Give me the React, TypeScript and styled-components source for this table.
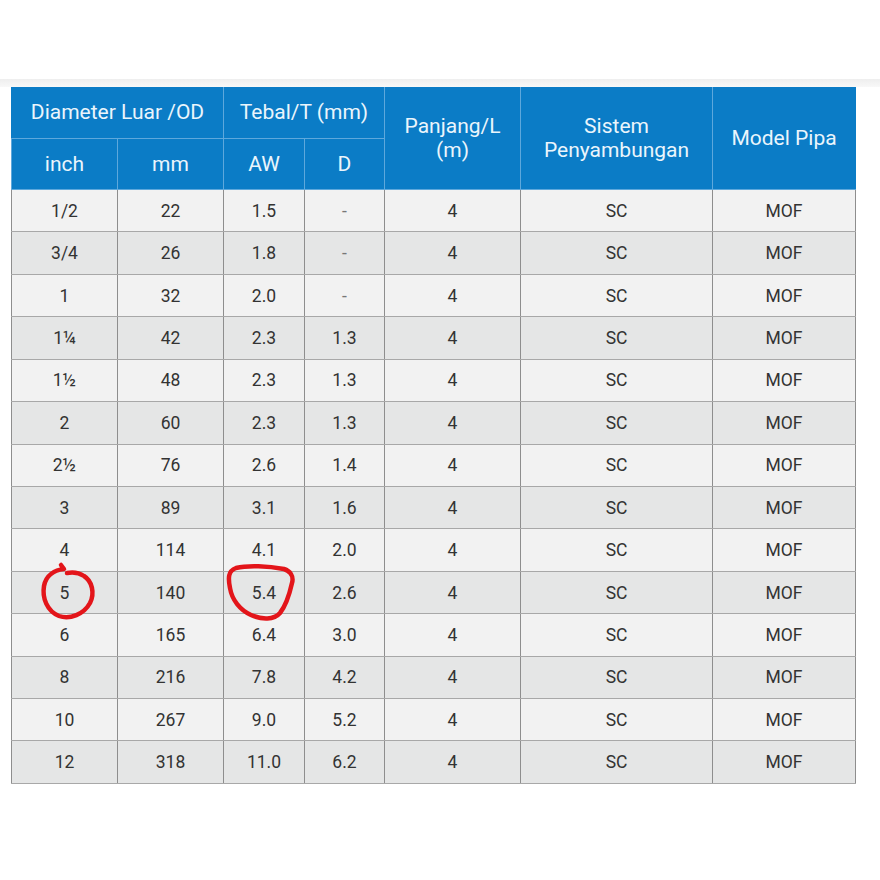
import React from 'react';
import styled, { createGlobalStyle } from 'styled-components';

const GlobalStyle = createGlobalStyle`
  html, body {
    margin: 0;
    padding: 0;
    background: #ffffff;
  }
  body {
    font-family: Roboto, "Liberation Sans", Arial, sans-serif;
  }
`;

const ROWS: Array<Array<string>> = [
  ['1/2', '22', '1.5', '-', '4', 'SC', 'MOF'],
  ['3/4', '26', '1.8', '-', '4', 'SC', 'MOF'],
  ['1', '32', '2.0', '-', '4', 'SC', 'MOF'],
  ['1¼', '42', '2.3', '1.3', '4', 'SC', 'MOF'],
  ['1½', '48', '2.3', '1.3', '4', 'SC', 'MOF'],
  ['2', '60', '2.3', '1.3', '4', 'SC', 'MOF'],
  ['2½', '76', '2.6', '1.4', '4', 'SC', 'MOF'],
  ['3', '89', '3.1', '1.6', '4', 'SC', 'MOF'],
  ['4', '114', '4.1', '2.0', '4', 'SC', 'MOF'],
  ['5', '140', '5.4', '2.6', '4', 'SC', 'MOF'],
  ['6', '165', '6.4', '3.0', '4', 'SC', 'MOF'],
  ['8', '216', '7.8', '4.2', '4', 'SC', 'MOF'],
  ['10', '267', '9.0', '5.2', '4', 'SC', 'MOF'],
  ['12', '318', '11.0', '6.2', '4', 'SC', 'MOF'],
];

const COL_WIDTHS = [106, 106, 81, 80, 136, 192, 143];

const App: React.FC = () => {
  return (
    <Page>
      <GlobalStyle />
      <TopBand />
      <TableWrap>
        <PipeTable>
          <colgroup>
            {COL_WIDTHS.map((w, i) => (
              <col key={i} style={{ width: w }} />
            ))}
          </colgroup>
          <thead>
            <tr>
              <HeadCell colSpan={2}>Diameter Luar /OD</HeadCell>
              <HeadCell colSpan={2}>Tebal/T (mm)</HeadCell>
              <HeadCell rowSpan={2}>
                Panjang/L
                <br />
                (m)
              </HeadCell>
              <HeadCell rowSpan={2}>
                Sistem
                <br />
                Penyambungan
              </HeadCell>
              <HeadCell rowSpan={2}>Model Pipa</HeadCell>
            </tr>
            <tr>
              <HeadCell>inch</HeadCell>
              <HeadCell>mm</HeadCell>
              <HeadCell>AW</HeadCell>
              <HeadCell>D</HeadCell>
            </tr>
          </thead>
          <tbody>
            {ROWS.map((row, r) => (
              <DataRow key={r} shaded={r % 2 === 1}>
                {row.map((cell, c) => (
                  <DataCell key={c} dim={cell === '-'}>
                    {cell}
                  </DataCell>
                ))}
              </DataRow>
            ))}
          </tbody>
        </PipeTable>
      </TableWrap>
      {/* hand-drawn red marks over two cells */}
      <Marks viewBox="0 0 880 880" width="880" height="880">
        <path
          d="M61 565 L64 569 C55 570 46 575 44 586 C42 598 47 611 59 616 C70 620 84 614 90 603 C95 593 92 581 84 576 C78 572 72 572 67 573"
          fill="none"
          stroke="#e3151a"
          strokeWidth="4.5"
          strokeLinecap="round"
          strokeLinejoin="round"
        />
        <path
          d="M284 569 C290 571 294 576 292 583 C290 592 287 604 280 613 C274 620 262 620 251 615 C240 610 232 600 230 588 C228 578 228 571 236 568 C248 565 268 566 284 569 Z"
          fill="none"
          stroke="#e3151a"
          strokeWidth="4.5"
          strokeLinecap="round"
          strokeLinejoin="round"
        />
      </Marks>
    </Page>
  );
};

const Page = styled.div`
  position: relative;
  width: 880px;
  height: 880px;
  padding-top: 79px;
  box-sizing: border-box;
  overflow: hidden;
`;

const TopBand = styled.div`
  height: 8px;
  background: linear-gradient(#eeeeee, #f8f8f8);
`;

const TableWrap = styled.div`
  padding-left: 11px;
`;

const PipeTable = styled.table`
  width: 844px;
  table-layout: fixed;
  border-collapse: collapse;
  border-spacing: 0;
`;

const HeadCell = styled.th`
  height: 50.5px;
  padding: 0;
  background: #0b7cc6;
  color: #eaf5fc;
  font-family: Roboto, "Liberation Sans", Arial, sans-serif;
  font-size: 21px;
  font-weight: 400;
  line-height: 24px;
  text-align: center;
  vertical-align: middle;
  border: 1px solid #5ea8dc;
  border-top: none;

  tr:first-child > &:first-child {
    border-left-color: #0b7cc6;
  }
  &:last-child {
    border-right-color: #0b7cc6;
  }
`;

const DataRow = styled.tr<{ shaded: boolean }>`
  background: ${({ shaded }) => (shaded ? '#e5e6e6' : '#f2f2f2')};
`;

const DataCell = styled.td<{ dim: boolean }>`
  height: 41.43px;
  padding: 0;
  color: ${({ dim }) => (dim ? '#777777' : '#333333')};
  font-family: Roboto, "Liberation Sans", Arial, sans-serif;
  font-size: 17.5px;
  text-align: center;
  vertical-align: middle;
  border-left: 1px solid #8e8e8e;
  border-right: 1px solid #8e8e8e;
  border-bottom: 1px solid #a8a8a8;
`;

const Marks = styled.svg`
  position: absolute;
  top: 0;
  left: 0;
  pointer-events: none;
`;

export default App;
